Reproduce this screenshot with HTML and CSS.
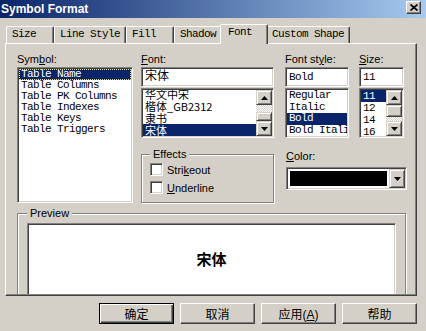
FILE: index.html
```html
<!DOCTYPE html>
<html lang="en">
<head>
    <meta charset="UTF-8">
    <title>Symbol Format</title>
    <link rel="stylesheet" href="styles.css">
</head>
<body>
    <div class="titlebar">
        <span class="title">Symbol Format</span>
        <span class="close">
            <svg width="8" height="7" viewBox="0 0 8 7"><path d="M0.5 0.5L7.5 6.5M7.5 0.5L0.5 6.5" stroke="#000" stroke-width="1.7"/></svg>
        </span>
    </div>

    <div class="tabs">
        <div class="tab">Size</div>
        <div class="tab">Line Style</div>
        <div class="tab">Fill</div>
        <div class="tab">Shadow</div>
        <div class="tab active">Font</div>
        <div class="tab">Custom Shape</div>
    </div>

    <div class="panel">
        <div class="panel-body">
            <div class="top">
                <div class="field symbol-field">
                    <label>Sym<u>b</u>ol:</label>
                    <div class="listbox symbol-list">
                        <div class="items mono">
                            <div class="item selected focus">Table Name</div>
                            <div class="item">Table Columns</div>
                            <div class="item">Table PK Columns</div>
                            <div class="item">Table Indexes</div>
                            <div class="item">Table Keys</div>
                            <div class="item">Table Triggers</div>
                        </div>
                    </div>
                </div>

                <div class="right">
                    <div class="fields">
                        <div class="field font-field">
                            <label><u>F</u>ont:</label>
                            <div class="textbox cjk">宋体</div>
                            <div class="listbox short">
                                <div class="items font-names">
                                    <div class="item">华文中宋</div>
                                    <div class="item">楷体_GB2312</div>
                                    <div class="item">隶书</div>
                                    <div class="item selected">宋体</div>
                                </div>
                                <div class="scrollbar">
                                    <span class="arrow"><svg width="7" height="4" viewBox="0 0 7 4"><path d="M3.5 0L7 4H0Z"/></svg></span>
                                    <span class="track end"><span class="thumb"></span></span>
                                    <span class="arrow"><svg width="7" height="4" viewBox="0 0 7 4"><path d="M0 0H7L3.5 4Z"/></svg></span>
                                </div>
                            </div>
                        </div>

                        <div class="field style-field">
                            <label>Font st<u>y</u>le:</label>
                            <div class="textbox mono">Bold</div>
                            <div class="listbox short">
                                <div class="items mono tight">
                                    <div class="item">Regular</div>
                                    <div class="item">Italic</div>
                                    <div class="item selected">Bold</div>
                                    <div class="item">Bold Italic</div>
                                </div>
                            </div>
                        </div>

                        <div class="field size-field">
                            <label><u>S</u>ize:</label>
                            <div class="textbox mono">11</div>
                            <div class="listbox short">
                                <div class="items mono sizes">
                                    <div class="item selected">11</div>
                                    <div class="item">12</div>
                                    <div class="item">14</div>
                                    <div class="item">16</div>
                                </div>
                                <div class="scrollbar">
                                    <span class="arrow"><svg width="7" height="4" viewBox="0 0 7 4"><path d="M3.5 0L7 4H0Z"/></svg></span>
                                    <span class="track"><span class="thumb tall"></span></span>
                                    <span class="arrow"><svg width="7" height="4" viewBox="0 0 7 4"><path d="M0 0H7L3.5 4Z"/></svg></span>
                                </div>
                            </div>
                        </div>
                    </div>

                    <div class="lower">
                        <fieldset class="group effects">
                            <legend>Effects</legend>
                            <div class="check"><span class="box"></span>Stri<u>k</u>eout</div>
                            <div class="check"><span class="box"></span><u>U</u>nderline</div>
                        </fieldset>

                        <div class="field color-field">
                            <label><u>C</u>olor:</label>
                            <div class="combo">
                                <span class="swatch"></span>
                                <span class="arrow drop"><svg width="7" height="4" viewBox="0 0 7 4"><path d="M0 0H7L3.5 4Z"/></svg></span>
                            </div>
                        </div>
                    </div>
                </div>
            </div>

            <fieldset class="group preview">
                <legend>Preview</legend>
                <div class="preview-box">宋体</div>
            </fieldset>
        </div>
    </div>

    <div class="buttons">
        <button class="btn default">确定</button>
        <button class="btn">取消</button>
        <button class="btn">应用(<u>A</u>)</button>
        <button class="btn">帮助</button>
    </div>
</body>
</html>
```

FILE: styles.css
```css
:root {
    --face: #d4d0c8;
    --shadow: #808080;
    --dark: #404040;
    --light: #ffffff;
    --select: #0a246a;
}

* {
    box-sizing: border-box;
    margin: 0;
    padding: 0;
}

body {
    width: 426px;
    height: 331px;
    overflow: hidden;
    background: var(--face);
    font-family: 'Liberation Sans', Arial, sans-serif;
    font-size: 11px;
    color: #000;
}

.mono {
    font-family: 'Liberation Mono', 'Noto Sans CJK SC', monospace;
    font-size: 11px;
    letter-spacing: -0.6px;
}

.cjk {
    font-family: 'Liberation Mono', 'Noto Sans CJK SC', monospace;
    font-size: 12px;
}

/* title bar */
.titlebar {
    height: 18px;
    display: flex;
    justify-content: space-between;
    align-items: flex-start;
    padding: 1px 5px 0 1px;
    background: linear-gradient(to right, #0a246a, #a6caf0);
    color: #fff;
    font-weight: bold;
    font-size: 12px;
    line-height: 16px;
}

.close {
    width: 15px;
    height: 13px;
    display: flex;
    align-items: center;
    justify-content: center;
    background: var(--face);
    border: 1px solid;
    border-color: var(--light) var(--dark) var(--dark) var(--light);
    box-shadow: inset -1px -1px var(--shadow);
}

/* tabs */
.tabs {
    display: flex;
    align-items: flex-end;
    height: 19px;
    margin: 6px 0 0 6px;
    position: relative;
    z-index: 1;
}

.tab {
    height: 17px;
    min-width: 48px;
    padding: 0 5px;
    border: 1px solid;
    border-bottom: none;
    border-color: var(--light) var(--dark) transparent var(--light);
    border-radius: 2px 2px 0 0;
    box-shadow: inset -1px 0 var(--shadow);
    font-family: 'Liberation Mono', monospace;
    font-size: 11px;
    letter-spacing: -0.6px;
    line-height: 15px;
    white-space: nowrap;
}

.tab.active {
    height: 20px;
    margin: 0 -2px -1px;
    padding: 0 7px;
    background: var(--face);
    position: relative;
}

/* panel */
.panel {
    margin-left: 5px;
    width: 412px;
    height: 253px;
    border: 1px solid;
    border-color: var(--light) var(--dark) var(--dark) var(--light);
    box-shadow: inset -1px -1px var(--shadow);
    padding: 0 1px 1px 0;
}

.panel-body {
    height: 100%;
    overflow: hidden;
    padding: 8px 0 0 11px;
}

.top {
    display: flex;
}

label {
    display: block;
    line-height: 14px;
    margin-bottom: 1px;
    white-space: nowrap;
}

.symbol-field {
    width: 116px;
}

.right {
    margin-left: 8px;
}

.fields {
    display: flex;
}

.font-field {
    width: 133px;
}

.style-field {
    width: 64px;
    margin-left: 11px;
}

.size-field {
    width: 45px;
    margin-left: 10px;
}

/* sunken controls */
.textbox,
.listbox,
.box,
.combo,
.preview-box {
    background: var(--light);
    border: 1px solid;
    border-color: var(--shadow) var(--light) var(--light) var(--shadow);
    box-shadow: inset 1px 1px var(--dark), inset -1px -1px var(--face);
}

.textbox {
    height: 20px;
    padding: 1px 3px;
    line-height: 16px;
    white-space: nowrap;
    overflow: hidden;
}

.listbox {
    display: flex;
    padding: 1px;
    overflow: hidden;
}

.listbox.short {
    height: 50px;
    margin-top: 1px;
}

.symbol-list {
    height: 136px;
}

.items {
    flex: 1;
    min-width: 0;
    overflow: hidden;
    display: flex;
    flex-direction: column;
    line-height: 11px;
}

.item {
    flex-shrink: 0;
    height: 11px;
    padding-left: 2px;
    white-space: nowrap;
}

.items.font-names {
    justify-content: flex-end;
    font-family: 'Noto Sans CJK SC', sans-serif;
    font-size: 11px;
    line-height: 12px;
}

.items.font-names .item {
    height: 12px;
}

.items.tight .item {
    height: 11.5px;
    line-height: 11.5px;
}

.items.sizes .item {
    height: 12px;
    line-height: 12px;
}

.item.selected {
    background: var(--select);
    color: #fff;
}

.item.focus {
    outline: 1px dotted #d8d890;
    outline-offset: -1px;
}

/* scrollbars */
.scrollbar {
    width: 16px;
    flex-shrink: 0;
    display: flex;
    flex-direction: column;
}

.arrow {
    height: 15px;
    display: flex;
    align-items: center;
    justify-content: center;
    background: var(--face);
    border: 1px solid;
    border-color: var(--face) var(--dark) var(--dark) var(--face);
    box-shadow: inset 1px 1px var(--light), inset -1px -1px var(--shadow);
}

.track {
    flex: 1;
    display: flex;
    flex-direction: column;
    background: repeating-conic-gradient(var(--face) 0 25%, var(--light) 0 50%) 0 0 / 2px 2px;
}

.track.end {
    justify-content: flex-end;
}

.thumb {
    height: 9px;
    background: var(--face);
    border: 1px solid;
    border-color: var(--face) var(--dark) var(--dark) var(--face);
    box-shadow: inset 1px 1px var(--light), inset -1px -1px var(--shadow);
}

.thumb.tall {
    height: 12px;
}

/* group boxes */
.group {
    border: 1px solid var(--shadow);
    box-shadow: inset 1px 1px var(--light), 1px 1px var(--light);
    min-width: 0;
}

.group legend {
    line-height: 13px;
    padding: 0 3px;
    background: var(--face);
}

.lower {
    display: flex;
    align-items: flex-start;
}

.effects {
    width: 133px;
    margin-top: 10px;
    padding: 2px 8px 3px;
}

.check {
    display: flex;
    align-items: center;
    height: 13px;
    margin-bottom: 5px;
}

.box {
    width: 13px;
    height: 13px;
    margin-right: 4px;
}

.color-field {
    width: 121px;
    margin: 11px 0 0 12px;
}

.combo {
    height: 23px;
    margin-top: 4px;
    display: flex;
    padding: 1px;
}

.swatch {
    flex: 1;
    margin: 2px;
    background: #000;
}

.drop {
    width: 16px;
    height: auto;
}

.preview {
    width: 389px;
    margin-top: 4px;
    padding: 3px 9px 0;
}

.preview-box {
    height: 90px;
    padding-top: 26px;
    text-align: center;
    font-family: 'Noto Sans CJK SC', sans-serif;
    font-size: 15px;
    font-weight: bold;
    line-height: 18px;
}

/* dialog buttons */
.buttons {
    display: flex;
    justify-content: flex-end;
    gap: 6px;
    padding-right: 9px;
    margin-top: 7px;
}

.btn {
    width: 75px;
    height: 21px;
    background: var(--face);
    border: 1px solid;
    border-color: var(--light) var(--dark) var(--dark) var(--light);
    box-shadow: inset -1px -1px var(--shadow);
    font-family: 'Liberation Sans', 'Noto Sans CJK SC', sans-serif;
    font-size: 12px;
    color: #000;
}

.btn.default {
    border-color: #000;
    box-shadow: inset 1px 1px var(--light), inset -1px -1px var(--dark), inset -2px -2px var(--shadow);
}
```
